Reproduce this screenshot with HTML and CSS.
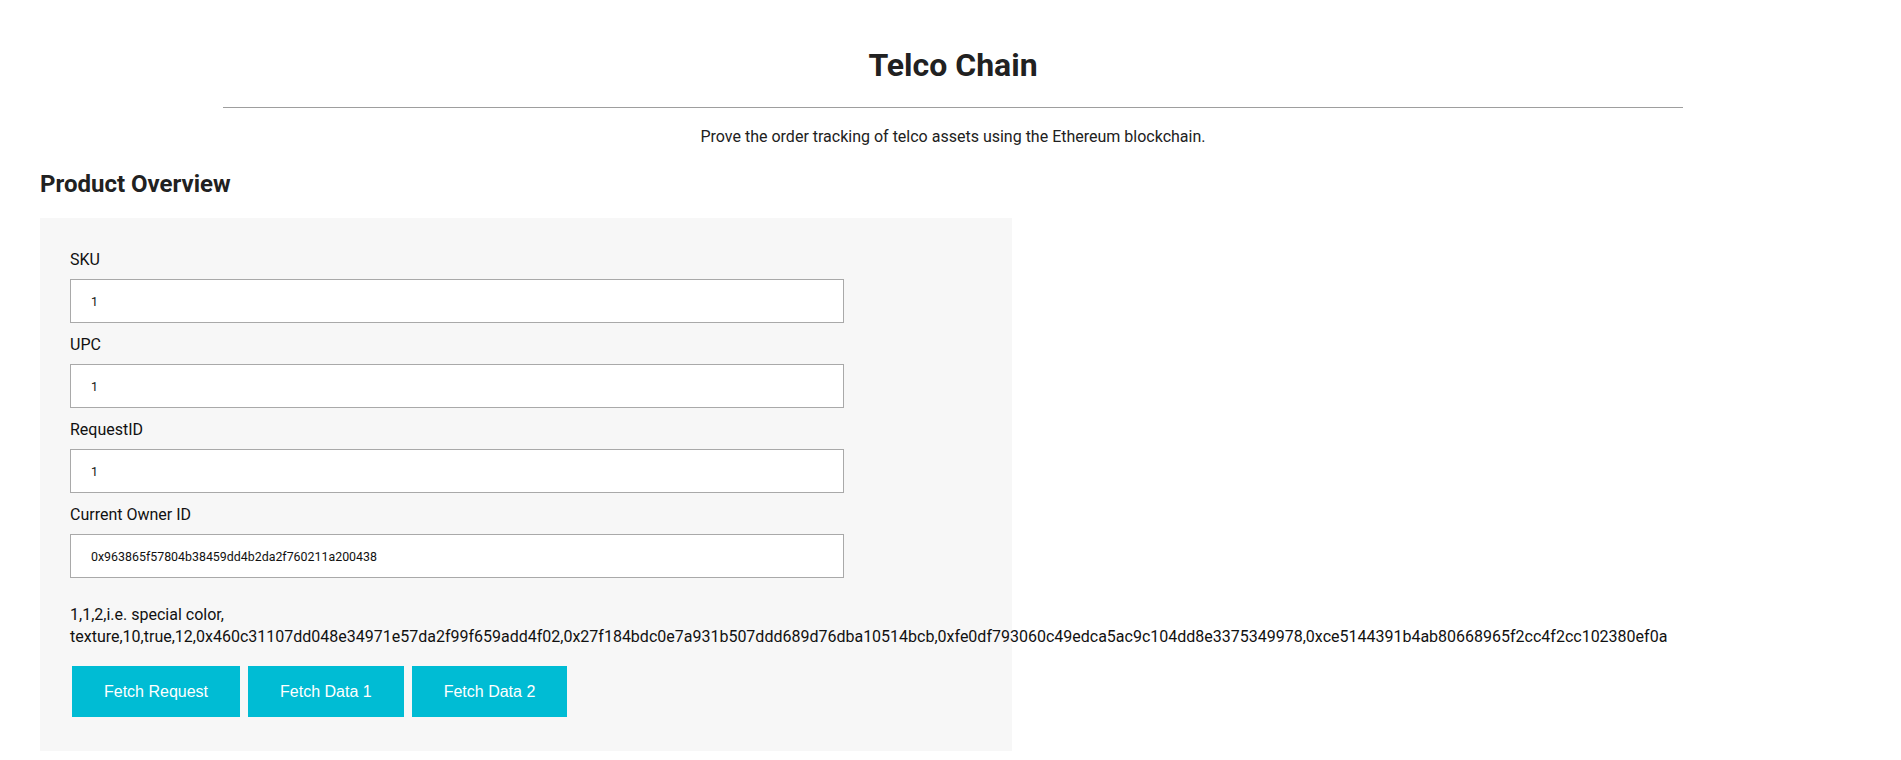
FILE: index.html
```html
<!DOCTYPE html>
<html lang="en">
<head>
<meta charset="utf-8">
<title>Telco Chain</title>
<link rel="stylesheet" href="styles.css">
</head>
<body>
<div class="app">
  <header class="header">
    <h1 class="title">Telco Chain</h1>
    <hr class="divider">
    <p class="subtitle">Prove the order tracking of telco assets using the Ethereum blockchain.</p>
  </header>
  <h2 class="section-title">Product Overview</h2>
  <section class="panel">
    <div class="field">
      <label class="field-label" for="sku">SKU</label>
      <input class="field-input" id="sku" type="text" value="1">
    </div>
    <div class="field">
      <label class="field-label" for="upc">UPC</label>
      <input class="field-input" id="upc" type="text" value="1">
    </div>
    <div class="field">
      <label class="field-label" for="req">RequestID</label>
      <input class="field-input" id="req" type="text" value="1">
    </div>
    <div class="field">
      <label class="field-label" for="owner">Current Owner ID</label>
      <input class="field-input" id="owner" type="text" value="0x963865f57804b38459dd4b2da2f760211a200438">
    </div>
    <p class="result">1,1,2,i.e. special color, texture,10,true,12,0x460c31107dd048e34971e57da2f99f659add4f02,0x27f184bdc0e7a931b507ddd689d76dba10514bcb,0xfe0df793060c49edca5ac9c104dd8e3375349978,0xce5144391b4ab80668965f2cc4f2cc102380ef0a</p>
    <div class="actions">
      <button class="btn" type="button">Fetch Request</button>
      <button class="btn" type="button">Fetch Data 1</button>
      <button class="btn" type="button">Fetch Data 2</button>
    </div>
  </section>
</div>
</body>
</html>
```
FILE: styles.css
```css
* { box-sizing: border-box; }

html, body {
  margin: 0;
  padding: 0;
  background: #ffffff;
}

body {
  font-family: Roboto, "Liberation Sans", Arial, sans-serif;
  font-size: 16px;
  color: #212121;
}

.app {
  padding: 46px 35px 0 40px;
}

.header {
  display: flex;
  flex-direction: column;
  align-items: center;
}

.title {
  margin: 0;
  font-size: 32px;
  font-weight: 700;
  line-height: 38px;
  color: #212121;
}

.divider {
  width: 80%;
  margin: 23px 0 0;
  border: 0;
  border-top: 1px solid #9e9e9e;
  height: 0;
}

.subtitle {
  margin: 19px 0 0;
  font-size: 16px;
  line-height: 19px;
  color: #212121;
}

.section-title {
  margin: 23.5px 0 0;
  font-size: 24px;
  font-weight: 700;
  line-height: 28px;
  color: #212121;
}

.panel {
  margin-top: 20.5px;
  width: 972px;
  background: #f7f7f7;
  padding: 32px 30px 32px 30px;
  display: flex;
  flex-direction: column;
}

.field {
  display: flex;
  flex-direction: column;
  margin-bottom: 12px;
}

.field-label {
  font-size: 16px;
  line-height: 19px;
  margin-bottom: 10px;
  color: #111;
}

.field-input {
  width: 774px;
  height: 44px;
  border: 1px solid #a9a9a9;
  border-radius: 0;
  background: #fff;
  padding: 0 20px;
  font-family: Roboto, "Liberation Sans", Arial, sans-serif;
  font-size: 12.4px;
  color: #111;
  outline: none;
}

.result {
  margin: 14px 0 0;
  font-size: 16px;
  line-height: 22px;
  color: #111;
}

.actions {
  margin-top: 16px;
  padding: 2px;
  display: flex;
  gap: 8px;
}

.btn {
  background: #00bcd4;
  color: #ffffff;
  border: 0;
  border-radius: 0;
  padding: 16px 32px;
  font-family: "Liberation Sans", Arial, sans-serif;
  font-size: 16px;
  line-height: 19px;
  cursor: pointer;
}
```
